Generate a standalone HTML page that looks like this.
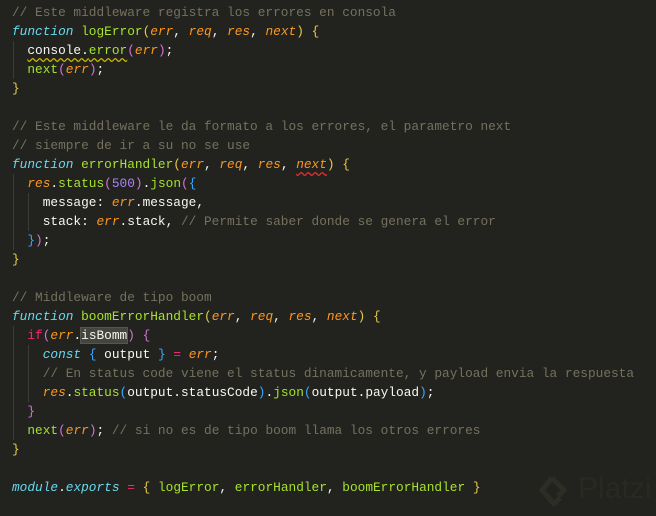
<!DOCTYPE html>
<html><head><meta charset="utf-8"><style>
html,body{margin:0;padding:0;background:#22231e;width:656px;height:516px;overflow:hidden;position:relative}
pre{margin:0;position:absolute;left:12px;top:3px;font-family:"Liberation Mono",monospace;font-size:12.8px;line-height:19px;color:#f8f8f2;white-space:pre}
.c{color:#75715e}.k{color:#66d9ef;font-style:italic}.f{color:#a6e22e}.p{color:#fd971f;font-style:italic}
.y{color:#e6c84c}.m{color:#d670d6}.b{color:#3aa6ff}.r{color:#f92672}.n{color:#ae81ff}
.sq{text-decoration:underline wavy #c8b400;text-underline-offset:3px}
.sr{text-decoration:underline wavy #e03030;text-underline-offset:3px}
.sel{background:#44453f;outline:1px solid #55564f}
.g{position:absolute;width:1px;background:#3b3c36}
</style></head><body>
<div class="g" style="left:13px;top:41px;height:38px"></div>
<div class="g" style="left:13px;top:174px;height:76px"></div>
<div class="g" style="left:28px;top:193px;height:38px"></div>
<div class="g" style="left:13px;top:326px;height:114px"></div>
<div class="g" style="left:28px;top:345px;height:57px"></div>
<pre><span class="c">// Este middleware registra los errores en consola</span>
<span class="k">function</span> <span class="f">logError</span><span class="y">(</span><span class="p">err</span>, <span class="p">req</span>, <span class="p">res</span>, <span class="p">next</span><span class="y">)</span> <span class="y">{</span>
  <span class="sq">console.<span class="f">error</span></span><span class="m">(</span><span class="p">err</span><span class="m">)</span>;
  <span class="f">next</span><span class="m">(</span><span class="p">err</span><span class="m">)</span>;
<span class="y">}</span>

<span class="c">// Este middleware le da formato a los errores, el parametro next</span>
<span class="c">// siempre de ir a su no se use</span>
<span class="k">function</span> <span class="f">errorHandler</span><span class="y">(</span><span class="p">err</span>, <span class="p">req</span>, <span class="p">res</span>, <span class="p sr">next</span><span class="y">)</span> <span class="y">{</span>
  <span class="p">res</span>.<span class="f">status</span><span class="m">(</span><span class="n">500</span><span class="m">)</span>.<span class="f">json</span><span class="m">(</span><span class="b">{</span>
    message: <span class="p">err</span>.message,
    stack: <span class="p">err</span>.stack, <span class="c">// Permite saber donde se genera el error</span>
  <span class="b">}</span><span class="m">)</span>;
<span class="y">}</span>

<span class="c">// Middleware de tipo boom</span>
<span class="k">function</span> <span class="f">boomErrorHandler</span><span class="y">(</span><span class="p">err</span>, <span class="p">req</span>, <span class="p">res</span>, <span class="p">next</span><span class="y">)</span> <span class="y">{</span>
  <span class="r">if</span><span class="m">(</span><span class="p">err</span>.<span class="sel">isBomm</span><span class="m">)</span> <span class="m">{</span>
    <span class="k">const</span> <span class="b">{</span> output <span class="b">}</span> <span class="r">=</span> <span class="p">err</span>;
    <span class="c">// En status code viene el status dinamicamente, y payload envia la respuesta</span>
    <span class="p">res</span>.<span class="f">status</span><span class="b">(</span>output.statusCode<span class="b">)</span>.<span class="f">json</span><span class="b">(</span>output.payload<span class="b">)</span>;
  <span class="m">}</span>
  <span class="f">next</span><span class="m">(</span><span class="p">err</span><span class="m">)</span>; <span class="c">// si no es de tipo boom llama los otros errores</span>
<span class="y">}</span>

<span class="k">module</span>.<span class="k">exports</span> <span class="r">=</span> <span class="y">{</span> <span class="f">logError</span>, <span class="f">errorHandler</span>, <span class="f">boomErrorHandler</span> <span class="y">}</span></pre>
<svg style="position:absolute;left:538px;top:474px" width="40" height="36" viewBox="0 0 40 36"><path d="M14 4 L4 16 L16 30 L22 24 M14 4 L26 16 L20 22" fill="none" stroke="#2c2e26" stroke-width="5" stroke-linejoin="round"/></svg>
<div style="position:absolute;left:578px;top:472px;font-family:'Liberation Sans',sans-serif;font-size:30px;color:#272922">Platzi</div>
</body></html>
